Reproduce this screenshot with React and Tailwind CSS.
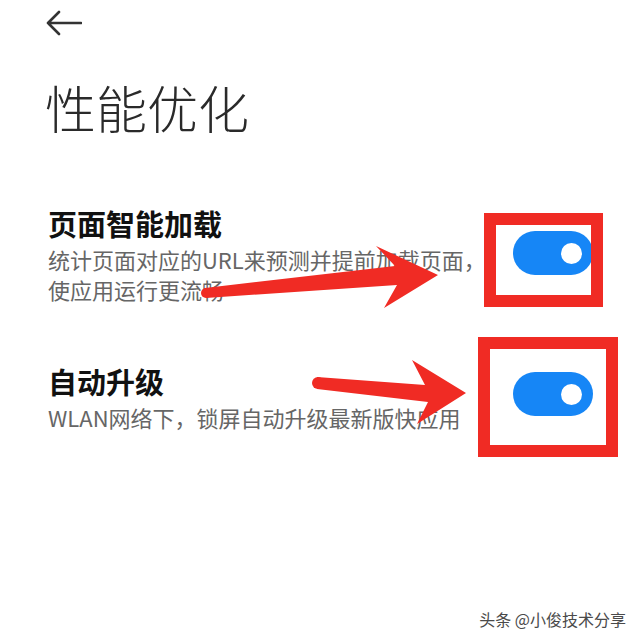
const settings = [
  {
    id: "preload",
    title: "页面智能加载",
    lines: ["统计页面对应的URL来预测并提前加载页面，", "使应用运行更流畅"],
    rowClass: "mt-[76px]",
    toggleClass: "mt-[22px]",
  },
  {
    id: "autoupdate",
    title: "自动升级",
    lines: ["WLAN网络下，锁屏自动升级最新版快应用"],
    rowClass: "mt-[63px]",
    toggleClass: "mt-[5px]",
  },
];

const BackIcon = () => (
  <svg width="36" height="26" viewBox="0 0 36 26" fill="none">
    <path
      d="M2 13 H35 M13 2 L2 13 L13 24"
      stroke="#333"
      strokeWidth="2.6"
      strokeLinecap="round"
      strokeLinejoin="round"
    />
  </svg>
);

const Toggle = ({ className }) => (
  <div
    className={`flex h-[44px] w-[80px] shrink-0 items-center justify-end rounded-full bg-[#1686f6] pr-[11px] ${className}`}
  >
    <div className="h-[21px] w-[21px] rounded-full bg-white" />
  </div>
);

// hand-drawn callouts laid over the screen
const Markup = () => (
  <>
    <div className="absolute left-[484px] top-[213px] h-[94px] w-[119px] border-[12px] border-[#f02b24]" />
    <div className="absolute left-[478px] top-[337px] h-[120px] w-[140px] border-[12px] border-[#f02b24]" />
    <svg
      className="pointer-events-none absolute left-0 top-0"
      width="640"
      height="640"
      viewBox="0 0 640 640"
    >
      <g fill="#f02b24">
        <circle cx="206" cy="293" r="5" />
        <path d="M205 288 L395 266 L376 246 L438 275 L384 308 L397 285 L206 298 Z" />
        <circle cx="318" cy="383" r="6" />
        <path d="M317 377 L425 385 L412 360 L466 393 L417 424 L428 402 L317 389 Z" />
      </g>
    </svg>
  </>
);

const App = () => {
  return (
    <div className="relative h-[640px] w-[640px] overflow-hidden bg-white font-['Noto_Sans_CJK_SC',sans-serif]">
      <div className="pl-[46px] pt-[10px]">
        <BackIcon />
      </div>

      <h1 className="ml-[45px] mt-[46px] text-[51px] font-light leading-none text-[#2a2a2a]">
        性能优化
      </h1>

      {settings.map((item) => (
        <div
          key={item.id}
          className={`flex items-start justify-between pl-[48px] pr-[47px] ${item.rowClass}`}
        >
          <div>
            <h2 className="text-[29px] font-bold leading-none text-[#111]">
              {item.title}
            </h2>
            <p className="mt-[6px] whitespace-nowrap text-[22px] leading-[30px] text-[#666]">
              {item.lines.map((line, i) => (
                <span key={i} className="block">
                  {line}
                </span>
              ))}
            </p>
          </div>
          <Toggle className={item.toggleClass} />
        </div>
      ))}

      <Markup />

      <div className="absolute bottom-[13px] right-[14px] text-[16px] leading-none text-[#4a4a4a] [text-shadow:0_0_2px_#fff,0_0_1px_#fff]">
        头条 @小俊技术分享
      </div>
    </div>
  );
};

export default App;
